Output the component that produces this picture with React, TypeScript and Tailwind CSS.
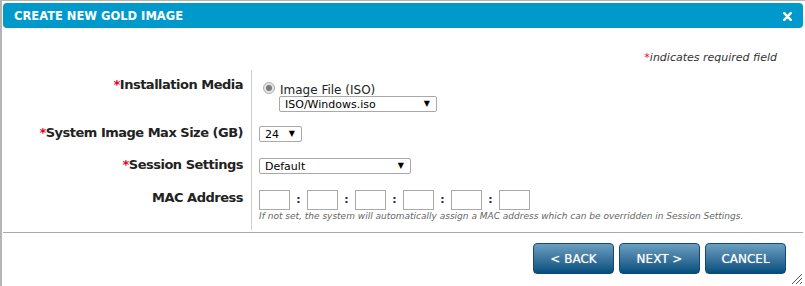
import React from 'react';

const Req = () => <span className="text-[#e4002b]">*</span>;

const FakeSelect = ({ value, width }: { value: string; width: string }) => (
  <div
    className={`${width} h-[16px] border border-[#a9a9a9] rounded-[2px] bg-white flex items-center justify-between pl-[5px] pr-[6px] text-[11px] text-black`}
  >
    <span className="leading-none">{value}</span>
    <span className="text-[8px] leading-none">▼</span>
  </div>
);

export default function App() {
  const macBoxes = [0, 1, 2, 3, 4, 5];
  const labelCls = 'pr-[8px] text-right text-[13px] leading-[16px] font-bold tracking-[-0.5px]';

  return (
    <div
      className="relative w-[805px] h-[286px] overflow-hidden bg-white border-l-2 border-t border-[#b5b5b5] pt-[2px] pl-px pr-[2px]"
      style={{ fontFamily: '"DejaVu Sans", Verdana, sans-serif' }}
    >
      {/* title bar */}
      <div className="h-[25px] rounded-[4px] bg-[#0099cc] flex items-center justify-between pl-[11px] pr-[11px]">
        <span className="text-white font-bold text-[11.5px] mt-[2px]">CREATE NEW GOLD IMAGE</span>
        <svg width="9" height="9" viewBox="0 0 9 9" className="mt-px">
          <path d="M1.2 1.2 L7.8 7.8 M7.8 1.2 L1.2 7.8" stroke="white" strokeWidth="2.4" strokeLinecap="round" />
        </svg>
      </div>

      <div className="mt-[23px] pr-[26px] text-right text-[11px] leading-[14px] italic text-[#333]">
        <Req />indicates required field
      </div>

      {/* form rows */}
      <div className="mt-[5px] grid grid-cols-[248px_1fr] text-[#222]">
        <div className={`${labelCls} pt-[7px]`}>
          <Req />Installation Media
        </div>
        <div className="border-l border-[#cfcfcf] pl-[7px] pt-[10px] pb-[6px]">
          <div className="h-[16px] flex items-center">
            <div className="ml-[4px] w-[12px] h-[12px] rounded-full border border-[#b0b0b0] bg-[#e2e2e2] flex items-center justify-center">
              <div className="w-[6px] h-[6px] rounded-full bg-[#7a7a7a]" />
            </div>
            <span className="ml-[5px] text-[12px] leading-[16px] text-[#222] mt-[3px]">Image File (ISO)</span>
          </div>
          <div className="ml-[20px]">
            <FakeSelect value="ISO/Windows.iso" width="w-[158px]" />
          </div>
        </div>

        <div className={`${labelCls} pt-[7px]`}>
          <Req />System Image Max Size (GB)
        </div>
        <div className="border-l border-[#cfcfcf] pl-[7px] pt-[8px] pb-[8px]">
          <FakeSelect value="24" width="w-[43px]" />
        </div>

        <div className={`${labelCls} pt-[7px]`}>
          <Req />Session Settings
        </div>
        <div className="border-l border-[#cfcfcf] pl-[7px] pt-[8px] pb-[8px]">
          <FakeSelect value="Default" width="w-[152px]" />
        </div>

        <div className={`${labelCls} pt-[8px]`}>MAC Address</div>
        <div className="border-l border-[#cfcfcf] pl-[7px] pt-[8px] pb-[9px]">
          <div className="flex items-center">
            {macBoxes.map((i) => (
              <React.Fragment key={i}>
                <div className="w-[31px] h-[20px] border border-[#a9a9a9] bg-white" />
                {i < 5 && (
                  <span className="w-[17px] text-center text-[11px] font-bold text-[#1b2a4a]">:</span>
                )}
              </React.Fragment>
            ))}
          </div>
          <div className="text-[9px] leading-[10px] italic text-[#666] mt-px">
            If not set, the system will automatically assign a MAC address which can be overridden in Session Settings.
          </div>
        </div>
      </div>

      <div className="mt-[2px] h-px bg-[#aaaaaa]" />

      {/* buttons */}
      <div className="mt-[10px] flex justify-end gap-[5px] pr-[17px]">
        {['< BACK', 'NEXT >', 'CANCEL'].map((label) => (
          <button
            key={label}
            className="w-[81px] h-[31px] rounded-[4px] border border-[#0d4d74] bg-gradient-to-b from-[#6b9fc0] to-[#004f7e] text-white text-[12px]"
            style={{ textShadow: '0 0 1px rgba(255,255,255,0.6)' }}
          >
            {label}
          </button>
        ))}
      </div>

      {/* resize grip */}
      <svg className="absolute right-[2px] bottom-[1px]" width="13" height="13" viewBox="0 0 13 13">
        <path d="M12 2 L2 12 M12 6 L6 12 M12 10 L10 12" stroke="#555" strokeWidth="1" />
      </svg>
    </div>
  );
}
